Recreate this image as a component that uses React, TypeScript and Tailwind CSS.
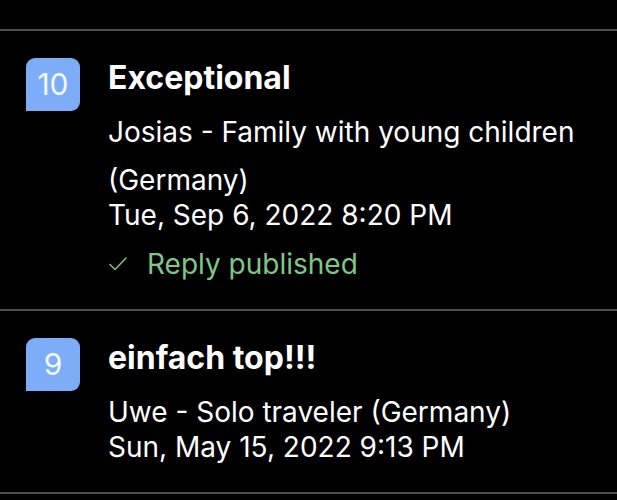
const reviews = [
  {
    score: 10,
    title: "Exceptional",
    lines: ["Josias - Family with young children", "(Germany)"],
    date: "Tue, Sep 6, 2022 8:20 PM",
    replied: true,
  },
  {
    score: 9,
    title: "einfach top!!!",
    lines: ["Uwe - Solo traveler (Germany)"],
    date: "Sun, May 15, 2022 9:13 PM",
    replied: false,
  },
];

function Check() {
  return (
    <svg width="20" height="16" viewBox="0 0 20 16" fill="none">
      <polyline
        points="2,8.5 7,13.5 18,2"
        stroke="#7cc281"
        strokeWidth="1.6"
        strokeLinecap="round"
        strokeLinejoin="round"
      />
    </svg>
  );
}

export default function App() {
  return (
    <div
      className="w-[617px] h-[500px] overflow-hidden bg-black text-white"
      style={{ fontFamily: "Inter, 'Noto Sans', sans-serif" }}
    >
      <div className="h-[29px]" />
      {reviews.map((r) => (
        <div key={r.score}>
          <div className="h-[2px] bg-[#4d4d4d]" />
          <div className="flex pt-[27px] pb-[28px] pl-[26px]">
            <div className="w-[54px] h-[53px] shrink-0 flex items-center justify-center bg-[#7cadf6] rounded-tl-[9px] rounded-tr-[9px] rounded-br-[9px] text-[30px] font-normal text-[#f4f8ff]">
              {r.score}
            </div>
            <div className="ml-[28px] flex flex-col">
              <div className="mt-px text-[32px] leading-[38px] font-bold">{r.title}</div>
              <div className="mt-[18px] text-[28px] leading-[34px]">
                {r.lines.map((l, i) => (
                  <div key={i} className={i > 0 ? "mt-[14px]" : ""}>
                    {l}
                  </div>
                ))}
              </div>
              <div className="mt-px text-[28px] leading-[34px]">{r.date}</div>
              {r.replied && (
                <div className="mt-[15px] flex items-center gap-[19px] text-[28px] leading-[34px] text-[#80c686]">
                  <Check />
                  <span>Reply published</span>
                </div>
              )}
            </div>
          </div>
        </div>
      ))}
      <div className="h-[2px] bg-[#4d4d4d]" />
    </div>
  );
}
